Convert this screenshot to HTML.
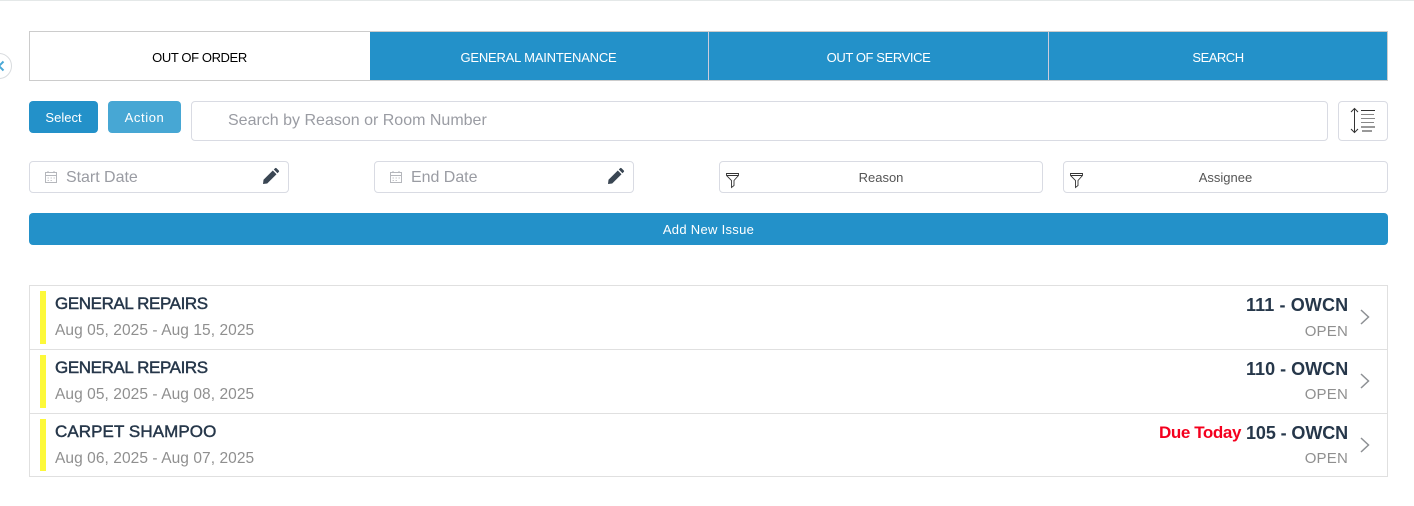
<!DOCTYPE html>
<html><head><meta charset="utf-8">
<style>
html,body{margin:0;padding:0;width:1414px;height:506px;overflow:hidden;background:#fff;font-family:"Liberation Sans",sans-serif}
.a{position:absolute;box-sizing:border-box}
.t{position:absolute;white-space:nowrap;line-height:20px;height:20px}
.c{text-align:center}
.r{text-align:right}
.tab{font-size:13px;color:#fff}
.box{border:1px solid #d9dbe3;border-radius:4px;background:#fff}
.title{font-size:17px;font-weight:400;color:#26374a;-webkit-text-stroke:.45px #26374a}
.date{font-size:15.5px;color:#8f8f8f;letter-spacing:.07px}
.room{font-size:18px;font-weight:700;color:#26374a;left:1246px}
.open{font-size:15px;color:#8f8f8f;letter-spacing:.2px}
.bar{left:40px;width:6px;background:#fdf93a}
</style></head><body>
<div class="a" style="left:0;top:0;width:1414px;height:1px;background:#e4e8e8"></div>

<svg class="a" style="left:0;top:52px" width="13" height="28" viewBox="0 0 13 28"><circle cx="-1" cy="14" r="12.5" fill="#fff" stroke="#d9dcdf"/><path d="M5 9.500 L0.500 14 L5 18.500" transform="translate(-1.500 0)" fill="none" stroke="#4aa8d6" stroke-width="2"/></svg>

<div class="a" style="left:29px;top:31px;width:1359px;height:50px;border:1px solid #ccc;background:#2391c9"></div>
<div class="a" style="left:30px;top:32px;width:340px;height:48px;background:#fff"></div>
<div class="a" style="left:708px;top:32px;width:1px;height:48px;background:#ccd"></div>
<div class="a" style="left:1048px;top:32px;width:1px;height:48px;background:#ccd"></div>
<div class="t c tab" style="left:30px;top:48px;width:339px;color:#000;letter-spacing:-.4px">OUT OF ORDER</div>
<div class="t c tab" style="left:369px;top:48px;width:339px;letter-spacing:-.2px">GENERAL MAINTENANCE</div>
<div class="t c tab" style="left:709px;top:48px;width:339px;letter-spacing:-.4px">OUT OF SERVICE</div>
<div class="t c tab" style="left:1049px;top:48px;width:338px;letter-spacing:-.5px">SEARCH</div>

<div class="a" style="left:29px;top:101px;width:69px;height:32px;background:#2391c9;border-radius:4px"></div>
<div class="t c" style="left:29px;top:108px;width:69px;color:#fff;font-size:13px">Select</div>
<div class="a" style="left:108px;top:101px;width:73px;height:32px;background:#47a7d4;border-radius:4px"></div>
<div class="t c" style="left:108px;top:108px;width:73px;color:#fff;font-size:13px;letter-spacing:.6px">Action</div>
<div class="a box" style="left:191px;top:101px;width:1137px;height:40px"></div>
<div class="t" style="left:228px;top:111px;font-size:16px;color:#9a9ca3">Search by Reason or Room Number</div>
<div class="a box" style="left:1338px;top:101px;width:50px;height:40px"></div>
<svg class="a" style="left:1348px;top:106px" width="28" height="30" viewBox="0 0 28 30" fill="none" stroke="#333" stroke-width="1"><path d="M6.500 2.500V26.500M3 6L6.500 2.500L10 6M3 23L6.500 26.500L10 23"/><path d="M13 4.500H27M13 21H27M14 25H24" stroke="#333"/><path d="M13 8.500H26M13 12.500H27M13 16.500H26" stroke="#888"/></svg>

<div class="a box" style="left:29px;top:161px;width:260px;height:32px"></div>
<svg class="a" style="left:44px;top:170px" width="14" height="14" viewBox="0 0 14 14" fill="none" stroke="#b5b7bc"><path d="M1.500 2.500H12.500V12.500H1.500ZM1.500 5.500H12.500M4 1V3M10 1V3"/><path d="M3.500 8H5M6.500 8H8M9.500 8H11M3.500 10.500H5M6.500 10.500H8" stroke-width=".8"/></svg>
<div class="t" style="left:66px;top:168px;font-size:16px;color:#9a9ca3;letter-spacing:-.03px">Start Date</div>
<svg class="a" style="left:262px;top:167px" width="18" height="18" viewBox="0 0 18 18" fill="#3a4653"><path d="M1 17L1.500 12.800L10.800 3.500L14.500 7.200L5.200 16.500ZM11.800 2.500L13.200 1.100Q13.800 .6 14.400 1.100L16.900 3.600Q17.400 4.200 16.900 4.800L15.500 6.200Z"/></svg>

<div class="a box" style="left:374px;top:161px;width:260px;height:32px"></div>
<svg class="a" style="left:389px;top:170px" width="14" height="14" viewBox="0 0 14 14" fill="none" stroke="#b5b7bc"><path d="M1.500 2.500H12.500V12.500H1.500ZM1.500 5.500H12.500M4 1V3M10 1V3"/><path d="M3.500 8H5M6.500 8H8M9.500 8H11M3.500 10.500H5M6.500 10.500H8" stroke-width=".8"/></svg>
<div class="t" style="left:411px;top:168px;font-size:16px;color:#9a9ca3;letter-spacing:-.03px">End Date</div>
<svg class="a" style="left:607px;top:167px" width="18" height="18" viewBox="0 0 18 18" fill="#3a4653"><path d="M1 17L1.500 12.800L10.800 3.500L14.500 7.200L5.200 16.500ZM11.800 2.500L13.200 1.100Q13.800 .6 14.400 1.100L16.900 3.600Q17.400 4.200 16.900 4.800L15.500 6.200Z"/></svg>

<div class="a box" style="left:719px;top:161px;width:324px;height:32px"></div>
<svg class="a" style="left:725px;top:172px" width="15" height="17" viewBox="0 0 15 17" fill="none" stroke="#333" stroke-width=".9"><path d="M1.500 1.500H13.500V3.500L9 8.500V13.500L6.500 15.500V8.500L1.500 3.500ZM1.500 3.500H13.500"/></svg>
<div class="t c" style="left:719px;top:168px;width:324px;font-size:13px;color:#555">Reason</div>
<div class="a box" style="left:1063px;top:161px;width:325px;height:32px"></div>
<svg class="a" style="left:1069px;top:172px" width="15" height="17" viewBox="0 0 15 17" fill="none" stroke="#333" stroke-width=".9"><path d="M1.500 1.500H13.500V3.500L9 8.500V13.500L6.500 15.500V8.500L1.500 3.500ZM1.500 3.500H13.500"/></svg>
<div class="t c" style="left:1063px;top:168px;width:325px;font-size:13px;color:#555">Assignee</div>

<div class="a" style="left:29px;top:213px;width:1359px;height:32px;background:#2391c9;border-radius:4px"></div>
<div class="t c" style="left:29px;top:220px;width:1359px;color:#fff;font-size:13px;letter-spacing:.3px">Add New Issue</div>

<div class="a" style="left:29px;top:285px;width:1359px;height:192px;border:1px solid #e0e0e0"></div>
<div class="a" style="left:30px;top:349px;width:1357px;height:1px;background:#e0e0e0"></div>
<div class="a" style="left:30px;top:413px;width:1357px;height:1px;background:#e0e0e0"></div>

<div class="a bar" style="top:291px;height:53px"></div>
<div class="t title" style="left:55px;top:294px;letter-spacing:-.4px">GENERAL REPAIRS</div>
<div class="t date" style="left:55px;top:321px">Aug 05, 2025 - Aug 15, 2025</div>
<div class="t room" style="top:295px;letter-spacing:.12px">111 - OWCN</div>
<div class="t open r" style="right:66px;top:322px">OPEN</div>
<svg class="a" style="left:1359px;top:308px" width="12" height="18" viewBox="0 0 12 18" fill="none" stroke="#8d9094" stroke-width="1.500"><path d="M2 2L9.500 9L2 16"/></svg>

<div class="a bar" style="top:355px;height:53px"></div>
<div class="t title" style="left:55px;top:358px;letter-spacing:-.4px">GENERAL REPAIRS</div>
<div class="t date" style="left:55px;top:385px">Aug 05, 2025 - Aug 08, 2025</div>
<div class="t room" style="top:359px;letter-spacing:.02px">110 - OWCN</div>
<div class="t open r" style="right:66px;top:385px">OPEN</div>
<svg class="a" style="left:1359px;top:372px" width="12" height="18" viewBox="0 0 12 18" fill="none" stroke="#8d9094" stroke-width="1.500"><path d="M2 2L9.500 9L2 16"/></svg>

<div class="a bar" style="top:419px;height:52px"></div>
<div class="t title" style="left:55px;top:422px;letter-spacing:.08px">CARPET SHAMPOO</div>
<div class="t date" style="left:55px;top:449px">Aug 06, 2025 - Aug 07, 2025</div>
<div class="t r" style="right:173px;top:423px;font-size:17px;font-weight:700;color:#f4001e;letter-spacing:-.4px">Due Today</div>
<div class="t room" style="top:423px;letter-spacing:-.1px">105 - OWCN</div>
<div class="t open r" style="right:66px;top:449px">OPEN</div>
<svg class="a" style="left:1359px;top:436px" width="12" height="18" viewBox="0 0 12 18" fill="none" stroke="#8d9094" stroke-width="1.500"><path d="M2 2L9.500 9L2 16"/></svg>
</body></html>
